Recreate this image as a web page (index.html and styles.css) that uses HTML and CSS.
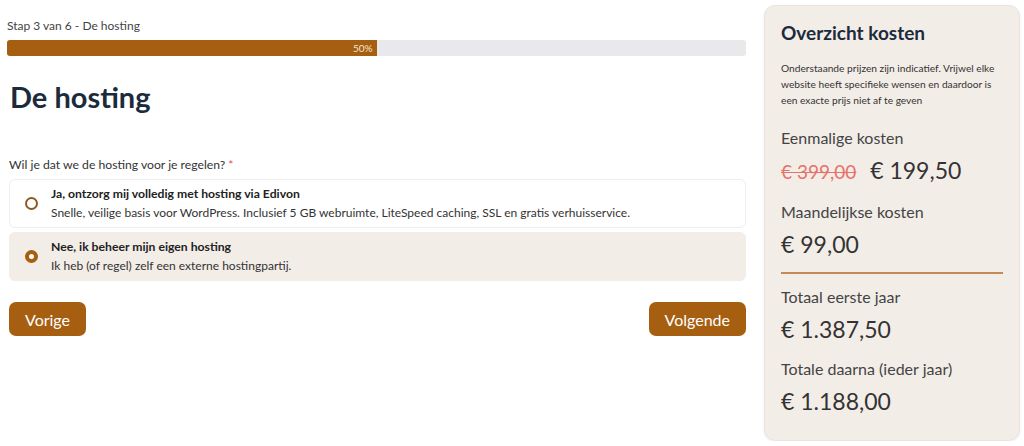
FILE: index.html
```html
<!DOCTYPE html>
<html lang="nl">
<head>
<meta charset="utf-8">
<title>De hosting</title>
<link rel="stylesheet" href="styles.css">
</head>
<body>
<div class="page">
  <main class="form">
    <div class="step">Stap 3 van 6 - De hosting</div>
    <div class="progress"><div class="progress-fill" style="width:50%"><span>50%</span></div></div>
    <h1 class="title">De hosting</h1>
    <div class="question">Wil je dat we de hosting voor je regelen? <span class="req">*</span></div>
    <div class="options">
      <label class="option">
        <span class="radio"></span>
        <span class="option-text">
          <span class="option-title">Ja, ontzorg mij volledig met hosting via Edivon</span>
          <span class="option-desc">Snelle, veilige basis voor WordPress. Inclusief 5 GB webruimte, LiteSpeed caching, SSL en gratis verhuisservice.</span>
        </span>
      </label>
      <label class="option selected">
        <span class="radio checked"></span>
        <span class="option-text">
          <span class="option-title">Nee, ik beheer mijn eigen hosting</span>
          <span class="option-desc">Ik heb (of regel) zelf een externe hostingpartij.</span>
        </span>
      </label>
    </div>
    <div class="nav">
      <button class="btn">Vorige</button>
      <button class="btn">Volgende</button>
    </div>
  </main>
  <aside class="summary">
    <h2 class="summary-title">Overzicht kosten</h2>
    <p class="summary-note">Onderstaande prijzen zijn indicatief. Vrijwel elke website heeft specifieke wensen en daardoor is een exacte prijs niet af te geven</p>
    <div class="cost first">
      <div class="cost-label">Eenmalige kosten</div>
      <div class="cost-value"><s class="old">€ 399,00</s> € 199,50</div>
    </div>
    <div class="cost">
      <div class="cost-label">Maandelijkse kosten</div>
      <div class="cost-value">€ 99,00</div>
    </div>
    <hr class="divider">
    <div class="cost">
      <div class="cost-label">Totaal eerste jaar</div>
      <div class="cost-value">€ 1.387,50</div>
    </div>
    <div class="cost">
      <div class="cost-label">Totale daarna (ieder jaar)</div>
      <div class="cost-value">€ 1.188,00</div>
    </div>
  </aside>
</div>
</body>
</html>
```
FILE: styles.css
```css
* { box-sizing: border-box; }
html, body { margin: 0; padding: 0; background: #fff; }
body {
  font-family: "Lato", "Open Sans", sans-serif;
  color: #333;
}
.page {
  display: flex;
  gap: 18px;
  padding: 5px 5px 0 7px;
}
.form {
  width: 739px;
  flex: none;
  padding-top: 14px;
}
.step {
  font-size: 12px;
  line-height: 14px;
  color: #444;
  margin-bottom: 7px;
}
.progress {
  height: 16px;
  background: #e9e9ec;
  border-radius: 3px;
  overflow: hidden;
}
.progress-fill {
  height: 100%;
  background: #a65e10;
  display: flex;
  justify-content: flex-end;
  align-items: center;
  padding-right: 4px;
}
.progress-fill span {
  color: #f3e6d6;
  font-size: 10px;
}
.title {
  font-size: 29px;
  font-weight: 700;
  color: #1c2b3c;
  margin: 24px 0 0 3px;
  line-height: 34px;
}
.question {
  font-size: 12.2px;
  color: #333;
  margin: 43px 0 0 2px;
  line-height: 16px;
}
.req { color: #d9534f; }
.options {
  display: flex;
  flex-direction: column;
  gap: 4px;
  margin: 6px 0 0 2px;
}
.option {
  display: flex;
  align-items: center;
  gap: 13px;
  padding: 6px 16px 6px 15px;
  border: 1px solid #eeeeee;
  border-radius: 6px;
  background: #fff;
  min-height: 48px;
}
.option.selected {
  background: #f3ede8;
  border-color: #f3ede8;
  min-height: 49px;
}
.radio {
  width: 13px;
  height: 13px;
  border-radius: 50%;
  border: 2px solid #8c5a1f;
  flex: none;
}
.radio.checked {
  border: 4px solid #a65e10;
  background: #fff;
}
.option-text {
  display: flex;
  flex-direction: column;
  gap: 3px;
}
.option-title {
  font-size: 12.2px;
  font-weight: 700;
  color: #222;
  line-height: 16px;
}
.option-desc {
  font-size: 12px;
  color: #333;
  line-height: 16px;
}
.nav {
  display: flex;
  justify-content: space-between;
  margin: 21px 0 0 2px;
}
.btn {
  font-family: inherit;
  font-size: 16px;
  color: #fff;
  background: #a65e10;
  border: none;
  border-radius: 7px;
  height: 34px;
  padding: 0 16px;
}
.summary {
  width: 256px;
  flex: none;
  background: #f3ede8;
  border: 1px solid #ebe4de;
  border-radius: 11px;
  height: 436px;
  padding: 16px 16px;
  box-shadow: 0 1px 3px rgba(0,0,0,0.06);
}
.summary-title {
  margin: 0;
  font-size: 19px;
  font-weight: 700;
  color: #1c2b3c;
  line-height: 22px;
}
.summary-note {
  font-size: 10.2px;
  line-height: 16px;
  color: #333;
  margin: 16px 0 0;
}
.cost { margin-top: 16px; }
.cost.first { margin-top: 20px; }
.cost-label {
  font-size: 16px;
  color: #444;
  line-height: 20px;
}
.cost-value {
  font-size: 23px;
  color: #333;
  line-height: 28px;
  margin-top: 8px;
}
.old {
  color: #e6736b;
  font-size: 19px;
  margin-right: 8px;
}
.divider {
  border: none;
  height: 2px;
  background: #c48a55;
  margin: 14px 0 0;
}
.divider + .cost { margin-top: 13px; }
```
